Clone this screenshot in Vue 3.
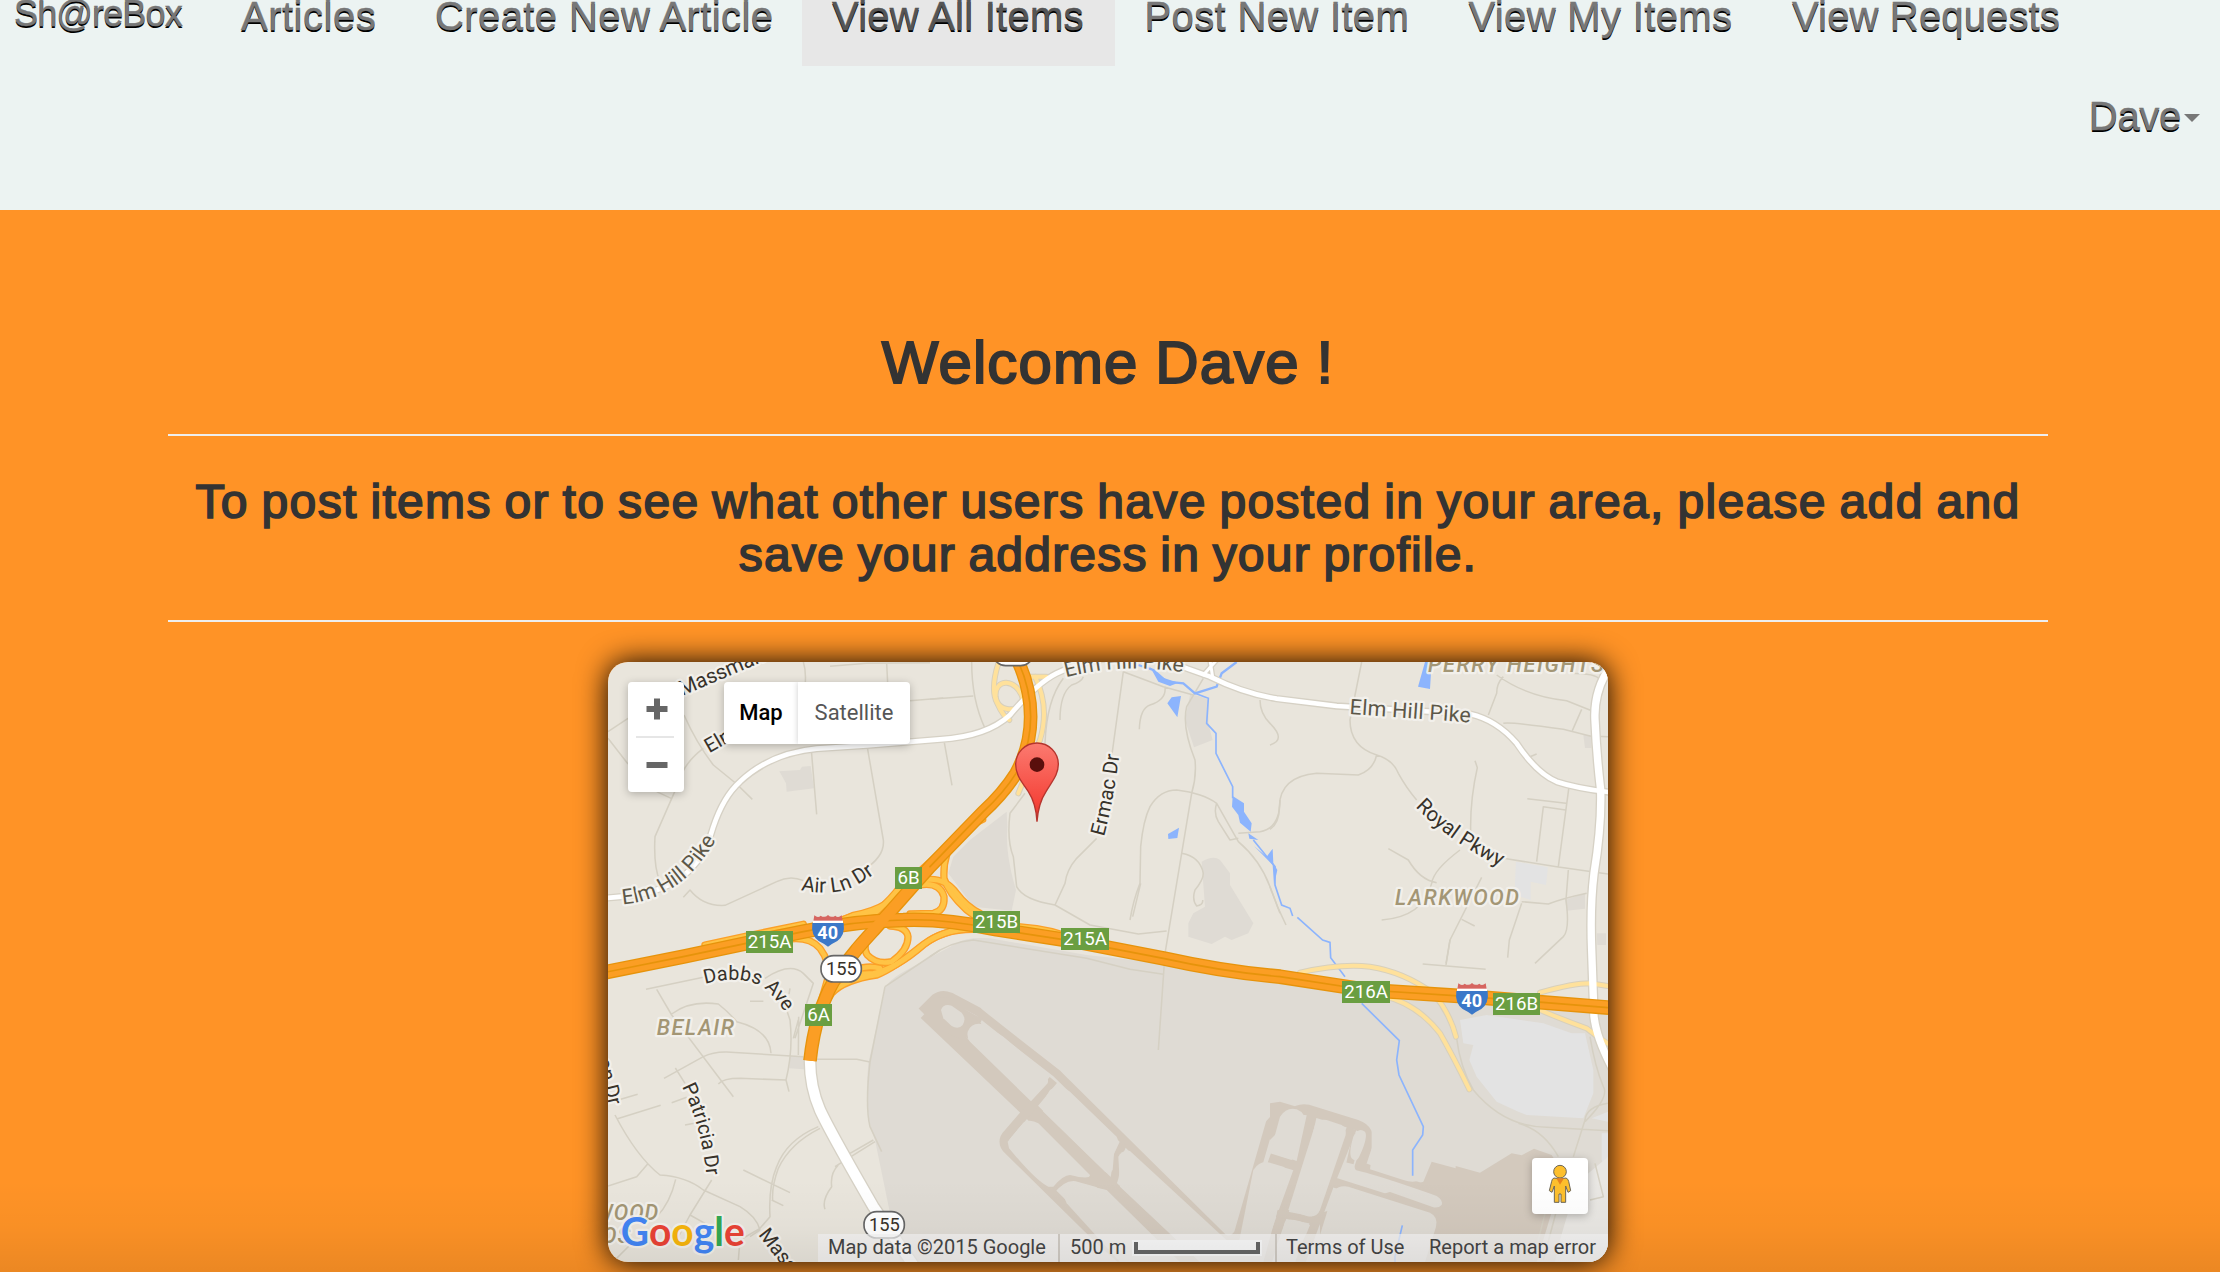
<script setup>
const links = [
  { label: 'Articles', width: 194, gap: 0.5 },
  { label: 'Create New Article', width: 397, gap: 0.4 },
  { label: 'View All Items', width: 312.5, gap: 0.25, active: true },
  { label: 'Post New Item', width: 324, gap: 0.35 },
  { label: 'View My Items', width: 323.5, gap: 0.35 },
  { label: 'View Requests', width: 328, gap: 0.15 },
]

const exits = [
  { t: '6B', x: 915, y: 681, w: 81 },
  { t: '215A', x: 468, y: 873, w: 141 },
  { t: '215B', x: 1149, y: 813, w: 141 },
  { t: '215A', x: 1413, y: 864, w: 144 },
  { t: '6A', x: 645, y: 1092, w: 81 },
  { t: '216A', x: 2256, y: 1023, w: 144 },
  { t: '216B', x: 2709, y: 1059, w: 141 },
]

const interstate = 'M40 998L280 950L468 910L640 875Q800 842 940 840Q1060 835 1220 868L1460 905L1720 955Q1900 995 2070 1010L2330 1050L2640 1070L3070 1104'
const parkway = 'M1278 50Q1322 140 1322 230Q1322 320 1278 400Q1240 460 1180 515L1020 680L850 872Q740 990 708 1070Q672 1150 660 1262'

const ramps = [
  'M1178 538Q1150 550 1110 585L970 712L890 790Q850 815 790 826L735 850',
  'M1070 645Q1060 675 1062 715Q1075 760 1130 810Q1170 845 1240 855L1340 866Q1380 872 1420 885',
  'M990 722Q1060 705 1100 760Q1130 800 1170 820',
  'M990 735Q1050 725 1062 770Q1065 812 1030 820L960 822',
  'M900 858Q950 860 954 890Q955 930 905 965Q860 975 832 945Q815 920 840 875',
  'M1160 868Q1060 865 1000 915Q920 985 850 1000L780 1004',
  'M1150 862Q1050 870 985 925Q910 985 860 1005Q760 1020 725 1060L700 1100',
  'M870 985Q830 975 800 990L735 1020',
  'M560 905Q650 880 690 925Q720 965 715 1010L695 1080',
  'M345 915L470 888L640 853',
  'M735 850Q780 825 860 815Q910 770 930 740',
]

const paleRamps = [
  'M1225 70Q1200 150 1222 190Q1240 230 1258 240',
  'M1300 180C1280 110 1212 115 1217 170Q1222 210 1270 208',
  'M1320 110L1370 110M1335 110Q1380 200 1350 300L1285 460',
  'M2130 998Q2250 970 2340 980Q2440 995 2530 1060Q2580 1120 2598 1190',
  'M2380 1068Q2480 1090 2550 1180Q2590 1250 2638 1348',
  'M2850 1058Q2950 1030 3000 1030L3054 1038',
  'M2850 1110Q2920 1140 2990 1165Q3020 1190 3060 1215',
]

const whiteRoads = [
  { d: 'M40 775L95 770Q230 760 300 690Q350 640 370 560Q400 470 450 425Q540 340 680 326L830 316L1050 298Q1190 290 1260 225Q1340 130 1400 100Q1480 60 1600 50', w: 14 },
  { d: 'M1700 60L1790 85L1860 110Q1960 160 2060 176L2240 198L2640 222Q2720 240 2780 310Q2840 400 2900 425Q2960 445 3070 458', w: 14 },
  { d: 'M1840 105L1880 60M1860 60L1868 112', w: 9 },
  { d: 'M3075 60Q3010 140 3015 240Q3020 350 3032 450Q3035 560 3012 700Q3000 800 3005 930L3012 1130Q3020 1200 3075 1300', w: 22 },
  { d: 'M660 1262Q660 1340 690 1410Q720 1475 850 1700L980 1890', w: 31 },
]

// Minor streets, grouped by map quadrant
const streets = [
  { x: 0, y: 0, d: 'M640 66Q648 90 646 126M720 79L830 70L1020 68M890 70L893 130M960 182L1060 174M54 275L114 235M54 295L114 372M200 455L245 476M282 225Q320 310 370 375L440 432L487 478M340 325Q280 370 265 430L195 590Q190 680 210 725M664 330L680 523M832 322L880 600Q885 650 820 690M280 772L300 750Q340 800 405 796L560 725Q600 705 640 722' },
  { x: 1020, y: 0, d: 'M125 66Q125 180 165 265M0 178L130 168M43 308L66 436M580 95L545 350M460 110Q455 125 425 135Q390 160 390 240M400 115Q350 180 345 310M580 95L700 140L790 165M705 140Q710 180 660 195Q630 205 628 268M820 115L770 200Q755 260 795 360Q800 410 785 460L705 940L685 1230M500 595L440 655Q410 690 405 730L375 795M285 460L240 520Q230 600 250 650L260 740Q280 780 375 795L480 855L625 882L710 873M600 840Q610 780 630 730L632 620Q640 540 660 500Q690 450 740 450Q820 460 860 490L925 605Q990 660 1020 740L1050 820M608 830L632 730M860 490Q850 520 865 545L900 600L925 595M925 580L990 575Q1050 565 1050 480M755 640Q810 650 820 700Q820 720 795 750Q785 780 800 798Q820 795 818 780M990 180Q990 220 1020 250Q1070 300 1020 315M0 950Q60 905 130 900L470 955L600 988L700 1003' },
  { x: 2040, y: 0, d: 'M275 66L240 240Q240 320 320 345Q370 360 385 400Q410 445 440 480M320 345Q310 390 265 405L140 400Q30 410 28 500Q28 550 0 568M680 105Q770 170 890 182L965 212M700 110Q680 130 680 160L655 225M700 250Q720 245 880 268L960 288L1014 290M935 208L907 272M615 362L622 383Q600 480 602 575M772 476L888 490M887 510L820 500L800 665M897 440L865 680M700 655L860 680L1014 702M355 626L415 660Q450 720 500 728M570 630Q490 690 485 730Q460 830 335 840M635 712L540 900L528 975M575 838L614 858M895 690L888 780Q900 870 880 890L795 970M755 785L835 792Q880 775 950 760M755 790L718 900L713 953M458 972L647 988M0 740Q20 800 48 855M900 100Q980 100 990 120M780 350L800 342' },
  { x: 0, y: 900, d: 'M168 148L340 112M200 148L245 225L430 470M480 184L520 184M245 222Q300 180 385 192Q420 220 440 245Q540 270 543 340M222 415L340 350Q370 335 410 336L640 350M680 358L800 358L840 366M385 432Q400 415 450 415L588 420Q610 330 600 240L590 210M588 420L597 455M610 295L625 240M625 345L626 230M525 115Q600 65 640 100L670 130L615 295M600 145L597 162M256 384L285 430M92 478L143 463M80 537L212 496M75 525Q140 650 210 705Q290 710 340 750L450 800Q500 830 510 870M54 738L140 710L175 670M257 718Q240 790 200 830M365 720L300 825L260 900M300 825L345 850M460 690L600 758M545 780L580 797M685 560Q590 600 560 680Q535 740 540 830L510 865M690 565Q600 610 565 685Q545 740 548 780M855 605L735 680M850 600L780 640M705 808Q695 780 725 740Q720 700 745 675M245 488L290 472M285 555L320 548M1050 30L885 140M840 366L885 140M840 366Q825 500 840 560L875 635M510 865L450 900L445 960M510 870L480 890M120 915L70 965' },
  { x: 2040, y: 900, d: 'M560 295Q570 380 610 450Q700 560 830 562L1014 572M745 550Q820 570 865 650M910 650L945 540Q950 500 1014 490M960 290Q975 380 1000 440Q1020 470 945 545M830 800L790 960M860 810L820 960M540 0L528 70M960 780L1000 770L975 670' },
]
</script>

<template>
  <div class="page">
    <header class="navbar">
      <nav class="row">
        <a class="brand">Sh@reBox</a>
        <a
          v-for="l in links"
          :key="l.label"
          class="link"
          :class="{ active: l.active }"
          :style="{ width: l.width + 'px', letterSpacing: l.gap + 'px' }"
        >{{ l.label }}</a>
      </nav>
      <div class="row user">
        <a class="link">Dave<i class="caret"></i></a>
      </div>
    </header>

    <main class="content">
      <h2>Welcome Dave !</h2>
      <hr />
      <h3>
        <span class="line one">To post items or to see what other users have posted in your area, please add and</span>
        <span class="line two">save your address in your profile.</span>
      </h3>
      <hr />

      <section class="map">
        <svg class="canvas" viewBox="54 66 3000 1800" width="1000" height="600">
          <defs>
            <linearGradient id="pinFill" x1="0" y1="0" x2="0" y2="1">
              <stop offset="0" stop-color="#fb7a70" />
              <stop offset=".75" stop-color="#f5453b" />
              <stop offset="1" stop-color="#e0352b" />
            </linearGradient>
            <path id="pElm" d="M98 793Q205 785 290 712Q350 655 412 545" />
            <path id="pAir" d="M632 750Q700 765 760 752Q815 735 885 677" />
            <path id="pDabbs" d="M345 1032Q450 1002 520 1042Q555 1070 605 1145" />
            <path id="pPat" d="M276 1340Q345 1480 354 1670" />
            <path id="pTop" d="M1428 112Q1600 66 1800 100" />
            <path id="pErmac" d="M1542 590Q1574 470 1592 310" />
            <path id="pRoyal" d="M2476 500Q2590 620 2785 705" />
            <g id="shield40">
              <path d="M7 3Q18 12 26 4Q38 12 48 2Q58 12 70 4Q78 12 89 3L92 21H4Z" fill="#d66560" />
              <path d="M3 19H93V26H3Z" fill="#fff" />
              <path d="M1 26H95Q100 62 76 80Q60 88 48 97Q36 88 20 80Q-4 62 1 26Z" fill="#3b78c8" />
              <text x="47" y="74" text-anchor="middle" class="num">40</text>
            </g>
            <g id="shield155">
              <rect x="2" y="2" width="121" height="79" rx="38" fill="#fff" stroke="#666" stroke-width="5" />
              <text x="63" y="60" text-anchor="middle" class="route">155</text>
            </g>
          </defs>

          <rect x="54" y="66" width="3000" height="1800" fill="#e9e5dc" />

          <!-- Airport grounds and lots -->
          <g fill="#dfdbd4">
            <path d="M885 1045Q895 1020 950 990L1100 910Q1130 890 1200 895L1490 945L1720 970L2040 1020L2330 1065L3054 1115V1866H930L855 1500Q820 1420 835 1270Z" />
            <path d="M1250 515L1140 600L1090 650L1075 700L1150 800L1265 812L1278 750Q1245 640 1252 560Z" />
            <path d="M1835 665Q1870 645 1890 660L1920 700V735L1990 850L1975 880L1925 900L1905 890L1865 912L1795 890V850L1810 820L1845 800Z" />
            <path d="M1800 165Q1830 165 1855 180V250L1868 300L1812 322L1785 240Z" />
            <path d="M568 394L630 390L636 380L662 378L672 445L590 455L588 430Z" />
            <path d="M600 1248L642 1250V1288L598 1285ZM2980 285H3004V324H2985ZM2925 780L2985 760V806L2930 812ZM3020 880H3048V915H3022Z" />
          </g>
          <g fill="#e3e3e3">
            <path d="M2610 1140L2690 1125L2860 1150L2945 1180L2985 1180L3010 1290V1360L2980 1435L2810 1425L2785 1415L2720 1385L2660 1310L2638 1260L2650 1215L2620 1210Z" />
            <path d="M2778 665L2874 682L2868 735L2822 725V780L2775 765V725Z" />
            <path d="M3005 1435L3054 1415V1445ZM3035 1480H3054V1600L3035 1560Z" />
          </g>

          <!-- Runways and taxiways -->
          <g fill="none" stroke="#d3c9bd" stroke-linejoin="round">
            <path d="M995 1115L1035 1075Q1055 1060 1080 1070L1165 1115Q1200 1145 1400 1300L1420 1320L1900 1795Q1925 1810 1945 1780L2040 1450L2085 1400" stroke-width="26" />
            <path d="M1010 1115L1320 1410L1560 1645L1850 1920" stroke-width="52" />
            <path d="M1050 1085L1170 1150" stroke-width="30" />
            <path d="M1390 1320L1320 1405L1255 1480Q1230 1505 1255 1530L1540 1810L1620 1880" stroke-width="28" />
            <path d="M1125 1190L1160 1140" stroke-width="34" />
            <path d="M1380 1655Q1420 1605 1460 1612L1560 1640Q1580 1620 1577 1560L1600 1510" stroke-width="24" />
            <path d="M1960 1820L2085 1470Q2105 1400 2155 1410L2300 1455Q2345 1470 2330 1520L2310 1580L2430 1625L2540 1660" stroke-width="32" />
            <path d="M2170 1405L2135 1565L2050 1800L2030 1870M2040 1555L2110 1575L2240 1630L2540 1725M2285 1465L2215 1640L2130 1870" stroke-width="30" />
            <path d="M1975 1720L1930 1870M2060 1720L2190 1745M2300 1480L2280 1570" stroke-width="22" />
          </g>
          <g fill="#d3c9bd">
            <path d="M995 1112L1035 1070L1090 1075L1150 1130L1120 1200L1060 1175Z" />
            <path d="M2190 1720L2500 1625L2525 1565L2597 1585V1578L2670 1598L2765 1540L2795 1546L2832 1526L2885 1545L2920 1600L2840 1866H2190Z" />
            <path d="M2040 1390L2070 1385L2120 1400L2090 1450L2040 1500Z" />
          </g>
          <g fill="#dfdbd4">
            <path d="M1053 1110Q1060 1090 1085 1097L1115 1118Q1130 1135 1118 1155Q1105 1170 1085 1158L1060 1135Z" />
            <path d="M1133 1175Q1145 1145 1180 1153L1240 1190L1345 1280Q1380 1305 1373 1330L1323 1384L1140 1205Q1130 1195 1133 1175Z" />
            <path d="M1352 1395L1380 1350Q1405 1330 1440 1355L1580 1490Q1590 1505 1573 1530L1568 1590Q1560 1605 1545 1595L1360 1415Z" />
            <path d="M1253 1505L1300 1448Q1320 1435 1345 1450L1500 1605Q1500 1620 1440 1605Q1420 1605 1390 1640H1375Q1340 1625 1257 1525Z" />
            <path d="M1585 1550Q1595 1530 1620 1533L1920 1810L1950 1866H1830L1590 1640Z" />
            <path d="M1415 1655Q1430 1625 1465 1630L1550 1650L1770 1866H1590L1430 1690Z" />
            <path d="M2070 1430Q2090 1400 2120 1408Q2150 1420 2142 1450L2105 1560L2040 1540Z" />
            <path d="M2175 1455Q2185 1435 2210 1440L2255 1455Q2270 1465 2267 1485L2190 1710Q2180 1735 2150 1728L2095 1710Z" />
            <path d="M2290 1490Q2305 1460 2325 1475Q2335 1490 2310 1545Q2300 1570 2285 1555Q2275 1540 2290 1490Z" />
            <path d="M2270 1588Q2290 1580 2540 1668Q2560 1680 2555 1695Q2545 1705 2530 1702L2275 1612Q2260 1600 2270 1588Z" />
            <path d="M2230 1655Q2245 1635 2275 1640L2520 1718Q2545 1730 2538 1760L2505 1866H2165Z" />
            <path d="M1990 1590Q2010 1560 2040 1568L2080 1580Q2095 1590 2090 1610L2020 1866H1935Z" />
            <path d="M2085 1745Q2100 1730 2160 1755L2150 1780L2100 1866H2050Z" />
            <path d="M2345 1550L2345 1440L2500 1560Q2510 1600 2490 1620Q2470 1630 2440 1620L2340 1588Z" />
          </g>
          <path d="M2910 1800L2960 1630L3054 1550V1866H2895Z" fill="#e9e7e3" />

          <g fill="none" stroke="#d5d0c3" stroke-width="4.6" stroke-linejoin="round">
            <path v-for="(s, i) in streets" :key="i" :d="s.d" :transform="`translate(${s.x} ${s.y})`" />
          </g>

          <!-- Creek and ponds -->
          <g fill="none" stroke="#8cb4fd" stroke-width="5">
            <path d="M1645 75L1690 90L1730 125L1780 130L1815 160L1880 140L1895 100L1940 66" stroke-width="7" />
            <path d="M1815 160L1855 175L1850 250L1878 280V340L1928 440V475M1990 600L2055 680V735L2075 795L2100 805L2108 828M2122 832L2198 900L2220 907L2222 953L2265 1010M2315 1090L2428 1202L2420 1260L2427 1305L2500 1460L2498 1485L2468 1530V1607M2437 1756L2415 1850V1866" />
          </g>
          <g fill="#8cb4fd">
            <path d="M1732 190L1745 172L1773 168L1762 232ZM1734 582L1767 563L1762 594L1735 597ZM1928 468L1962 490V515L1985 550L1982 575L1950 548L1945 525L1926 500ZM1975 580L2005 600L1978 596ZM1992 618L2030 650L2048 626L2050 670L2062 690L2052 735L2048 675ZM2505 66H2525L2520 147L2484 140ZM1680 80L1710 110L1765 128L1740 138L1705 125Z" />
          </g>

          <g fill="none" stroke-linecap="round" stroke-linejoin="round">
            <path v-for="(d, i) in paleRamps" :key="'pa' + i" :d="d" stroke="#d8d0bb" stroke-width="18" />
            <path v-for="(r, i) in whiteRoads" :key="'wa' + i" :d="r.d" stroke="#d6d1c5" :stroke-width="r.w + 8" />
            <path v-for="(d, i) in paleRamps" :key="'pb' + i" :d="d" stroke="#ffe19b" stroke-width="12" />
            <path v-for="(r, i) in whiteRoads" :key="'wb' + i" :d="r.d" stroke="#fff" :stroke-width="r.w" />
            <path v-for="(d, i) in ramps" :key="'ra' + i" :d="d" stroke="#fba028" stroke-width="22" />
            <path v-for="(d, i) in ramps" :key="'rb' + i" :d="d" stroke="#ffc345" stroke-width="14" />
            <path :d="interstate" stroke="#e6930b" stroke-width="44" />
            <path :d="parkway" stroke="#e6930b" stroke-width="41" stroke-linecap="butt" />
            <path :d="interstate" stroke="#fb9e24" stroke-width="36" />
            <path :d="parkway" stroke="#fb9e24" stroke-width="33" stroke-linecap="butt" />
            <path :d="interstate" stroke="#e6930b" stroke-width="5" />
            <path d="M1278 50Q1322 140 1322 230Q1322 320 1278 400Q1240 460 1180 515L1020 680" stroke="#e6930b" stroke-width="5" />
            <path d="M900 815L800 925" stroke="#fb9e24" stroke-width="30" />
          </g>

          <!-- Street labels -->
          <g class="road major">
            <text font-size="64"><textPath href="#pElm">Elm Hill Pike</textPath></text>
            <text font-size="64"><textPath href="#pTop">Elm Hill Pike</textPath></text>
            <text x="2278" y="222" font-size="64" textLength="364" transform="rotate(4 2278 222)">Elm Hill Pike</text>
          </g>
          <g class="road">
            <text x="276" y="168" font-size="62" transform="rotate(-23 276 168)">Massman</text>
            <text x="358" y="340" font-size="60" transform="rotate(-30 358 340)">Elm</text>
            <text font-size="62"><textPath href="#pAir">Air Ln Dr</textPath></text>
            <text font-size="59"><textPath href="#pDabbs">Dabbs Ave</textPath></text>
            <text font-size="60"><textPath href="#pPat">Patricia Dr</textPath></text>
            <text font-size="61"><textPath href="#pErmac">Ermac Dr</textPath></text>
            <text font-size="62"><textPath href="#pRoyal">Royal Pkwy</textPath></text>
            <text x="22" y="1260" font-size="60" transform="rotate(76 22 1260)">on Dr</text>
            <text x="504" y="1784" font-size="60" transform="rotate(52 504 1784)">Massman</text>
          </g>
          <g class="area">
            <text x="2415" y="795" textLength="375">LARKWOOD</text>
            <text x="2514" y="96" textLength="530">PERRY HEIGHTS</text>
            <text x="200" y="1185" textLength="235">BELAIR</text>
            <text x="208" y="1741" text-anchor="end">WOOD</text>
            <text x="124" y="1808" text-anchor="end">OS</text>
          </g>

          <g v-for="(e, i) in exits" :key="'e' + i">
            <rect :x="e.x" :y="e.y" :width="e.w" height="66" fill="#6a9e41" />
            <text class="exit" :x="e.x + e.w / 2" :y="e.y + 52" text-anchor="middle">{{ e.t }}</text>
          </g>
          <use href="#shield40" x="666" y="823" />
          <use href="#shield40" x="2598" y="1027" />
          <use href="#shield155" x="691" y="945" />
          <use href="#shield155" x="820" y="1713" />
          <use href="#shield155" x="1207" y="-4" />

          <!-- Marker -->
          <path d="M1341 545Q1338 490 1315 455C1295 425 1277 405 1277 373A64 64 0 0 1 1405 373C1405 405 1385 425 1368 455Q1345 490 1341 545Z" fill="url(#pinFill)" stroke="#b5342d" stroke-width="4" />
          <circle cx="1341" cy="374" r="22" fill="#5a0f0c" />

          <text x="92" y="1817" class="google" textLength="372" lengthAdjust="spacingAndGlyphs"><tspan fill="#4285f4">G</tspan><tspan fill="#ea4335">o</tspan><tspan fill="#f7b50c">o</tspan><tspan fill="#4285f4">g</tspan><tspan fill="#34a853">l</tspan><tspan fill="#ea4335">e</tspan></text>
        </svg>

        <div class="zoomer">
          <svg width="56" height="110" viewBox="0 0 56 110">
            <path d="M18.5 27H39.5M29 16.500V37.500M18.500 83H39.500" stroke="#666" stroke-width="6" />
            <path d="M8 55H46" stroke="#e6e6e6" stroke-width="2" />
          </svg>
        </div>
        <div class="types">
          <span class="type on">Map</span>
          <span class="type sat">Satellite</span>
        </div>
        <div class="pegman">
          <svg width="56" height="56" viewBox="0 0 168 168">
            <g fill="#fdbf2d" stroke="#6b6557" stroke-width="3">
              <path d="M66 60Q84 66 102 60Q108 62 110 70L116 98L108 103L101 84V133H87V108H81V133H67V84L60 103L52 98L59 70Q60 62 66 60Z" />
              <circle cx="84" cy="41" r="19" />
            </g>
            <path d="M73 61H96L84 80Z" fill="#e8821e" />
          </svg>
        </div>
        <footer class="credits">
          <span class="cell data">Map data ©2015 Google</span>
          <span class="cell scale">500 m<i class="bar"></i></span>
          <span class="cell terms">Terms of Use</span>
          <span class="report">Report a map error</span>
        </footer>
      </section>
    </main>
    <div class="fade"></div>
  </div>
</template>

<style>
body { overflow: hidden; }
</style>

<style scoped>
.page {
  position: relative;
  width: 2220px;
  height: 1272px;
  overflow: hidden;
  background: #ff9326;
  color: #333;
  font-family: "Liberation Sans", Arial, sans-serif;
}
.navbar {
  box-sizing: border-box;
  height: 210px;
  overflow: hidden;
  background: #ecf3f2;
}
.row { display: flex; height: 100px; }
.navbar .row:first-child { margin-top: -34px; }
.brand, .link {
  box-sizing: border-box;
  padding: 30px;
  line-height: 40px;
  font-size: 40px;
  color: #777;
  -webkit-text-stroke: .500px currentColor;
  text-shadow: 0 1.500px 0 #000;
  white-space: nowrap;
}
.brand {
  width: 211px;
  padding: 28px 0 0 14px;
  font-size: 36px;
  letter-spacing: -.85px;
}
.active { background: #e7e7e7; color: #555; }
.user { justify-content: flex-end; }
.user .link { display: flex; align-items: center; padding-right: 20px; letter-spacing: -.3px; }
.caret {
  margin: 4px 0 0 3px;
  border: 8px solid transparent;
  border-top-color: #777;
  border-bottom: 0;
}
.content {
  display: flex;
  flex-direction: column;
  align-items: center;
  width: 1880px;
  margin: 0 auto 0 168px;
  padding-top: 120px;
}
h2, h3 { margin: 0; font-weight: 400; text-align: center; white-space: nowrap; }
h2 { height: 104px; line-height: 66px; font-size: 60px; letter-spacing: 1.100px; word-spacing: -1px; -webkit-text-stroke: 2px #333; }
hr { width: 1880px; height: 2px; margin: 0; border: 0; background: #eee; }
h3 { height: 184px; padding-top: 40px; box-sizing: border-box; font-size: 48px; line-height: 52.800px; -webkit-text-stroke: 1.700px #333; }
.line { display: block; }
.one { letter-spacing: 1.330px; word-spacing: -1.900px; }
.two { letter-spacing: 1.200px; word-spacing: -1.900px; }
.map {
  position: relative;
  width: 1000px;
  height: 600px;
  margin-top: 40px;
  border-radius: 20px;
  box-shadow: 0 0 30px #000;
  font-family: Roboto, sans-serif;
}
.canvas { display: block; border-radius: 20px; font-family: Roboto, sans-serif; }
.road text, .area text, .google { paint-order: stroke; stroke: #f4f2ee; stroke-width: 14px; stroke-linejoin: round; stroke-opacity: .9; }
.road { fill: #37322a; }
.major { fill: #5c5748; }
.area { fill: #a39675; font-size: 65px; font-style: italic; font-weight: 500; letter-spacing: 3px; }
.exit { fill: #fff; font-size: 56px; }
.num { fill: #fff; font-size: 54px; font-weight: 700; }
.route { fill: #37322a; font-size: 55px; }
.google { font-family: Lato, sans-serif; font-size: 122px; font-weight: 700; }
.zoomer, .types, .pegman {
  position: absolute;
  background: #fff;
  border-radius: 4px;
  box-shadow: 0 2px 8px rgba(0, 0, 0, .25);
}
.zoomer { left: 20px; top: 20px; width: 56px; height: 110px; }
.types { left: 116px; top: 20px; display: flex; width: 186px; height: 62px; overflow: hidden; }
.type { line-height: 61px; font-size: 22px; text-align: center; }
.sat { width: 112px; color: #565656; box-shadow: 0 0 6px rgba(0, 0, 0, .2); }
.on { width: 74px; color: #000; font-weight: 500; }
.pegman { right: 20px; bottom: 48px; width: 56px; height: 56px; }
.credits {
  position: absolute;
  right: 0;
  bottom: 0;
  display: flex;
  width: 790px;
  height: 28px;
  border-bottom-right-radius: 20px;
  background: rgba(245, 245, 245, .7);
  color: #444;
  font-size: 20px;
  line-height: 26px;
  white-space: nowrap;
}
.cell { box-sizing: border-box; padding-left: 10px; }
.data { width: 242px; border-right: 2px solid #cfcac3; }
.scale { display: flex; width: 217px; border-right: 2px solid #cfcac3; }
.bar {
  box-sizing: border-box;
  width: 126px;
  height: 12px;
  margin: 8px 0 0 8px;
  border: 4px solid #666;
  border-top: 0;
  background: #f7f7f7;
  box-shadow: 0 0 0 2px #f7f7f7;
}
.terms { width: 152px; padding-left: 9px; }
.fade {
  position: absolute;
  left: 0;
  right: 0;
  bottom: 0;
  height: 92px;
  background: linear-gradient(rgba(0, 0, 0, 0), rgba(0, 0, 0, .025) 50%, rgba(0, 0, 0, .08));
}
</style>
